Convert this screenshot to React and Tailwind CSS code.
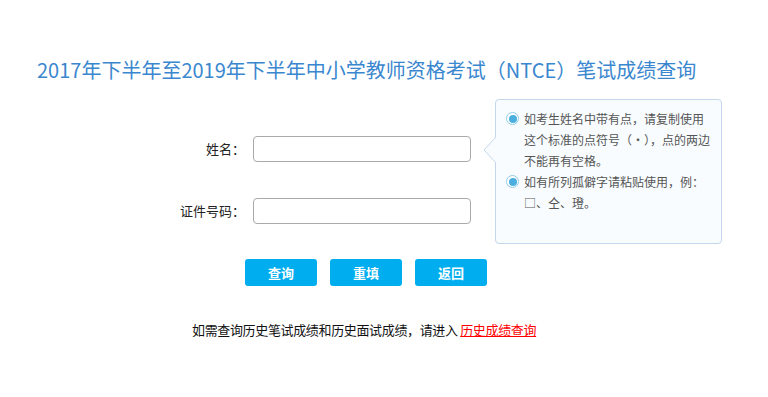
import React from "react";

const FONT = { fontFamily: '"Microsoft YaHei", "Noto Sans CJK SC", "Noto Sans", sans-serif' };

// 提示框里的一条说明
function Tip({ children }) {
  return (
    <div className="flex items-start gap-[5px]">
      <span className="mt-[4px] w-[13px] h-[13px] shrink-0 rounded-full border border-[#8fcbe8] bg-white flex items-center justify-center">
        <span className="w-[8px] h-[8px] rounded-full bg-[#4aafdf]" />
      </span>
      <p className="leading-[21px]">{children}</p>
    </div>
  );
}

export default function App() {
  return (
    <div className="relative w-[768px] h-[397px] bg-white overflow-hidden" style={FONT}>
      <h1 className="pt-[56px] pl-[37px] text-[20px] leading-[28px] text-[#3a87cf] whitespace-nowrap">
        2017年下半年至2019年下半年中小学教师资格考试（NTCE）笔试成绩查询
      </h1>

      {/* 表单 */}
      <div className="mt-[52px] flex flex-col gap-[36px] text-[13px] text-[#222]">
        <div className="flex items-center">
          <label className="w-[245px] text-right">姓名：</label>
          <input className="ml-[8px] w-[218px] h-[26px] border border-[#aaa] rounded-[4px] outline-none px-2" />
        </div>
        <div className="flex items-center">
          <label className="w-[245px] text-right">证件号码：</label>
          <input className="ml-[8px] w-[218px] h-[26px] border border-[#aaa] rounded-[4px] outline-none px-2" />
        </div>
      </div>

      <div className="mt-[35px] pl-[245px] flex gap-[13px] text-[13px] text-white font-bold">
        <button className="w-[72px] h-[27px] rounded-[3px] bg-[#00aeef]">查询</button>
        <button className="w-[72px] h-[27px] rounded-[3px] bg-[#00aeef]">重填</button>
        <button className="w-[72px] h-[27px] rounded-[3px] bg-[#00aeef]">返回</button>
      </div>

      <p className="mt-[34px] pl-[192px] text-[13px] tracking-[-0.35px] text-[#111] whitespace-nowrap">
        如需查询历史笔试成绩和历史面试成绩，请进入{" "}
        <a href="#" className="text-[#ff0000] underline">历史成绩查询</a>
      </p>

      {/* 提示框 */}
      <div className="absolute left-[495px] top-[99px] w-[227px] h-[145px] bg-[#f8fcff] border border-[#c5d6ec] rounded-[4px] pl-[10px] pr-2 pt-[8px] text-[12px] text-[#555]">
        <svg className="absolute left-[-13px] top-[37px]" width="14" height="26" viewBox="0 0 14 26">
          <path d="M13 0 L1 13 L13 26 Z" fill="#f8fcff" />
          <path d="M13 0 L1 13 L13 26" fill="none" stroke="#c5d6ec" strokeWidth="1" />
        </svg>
        <Tip>如考生姓名中带有点，请复制使用这个标准的点符号（·），点的两边不能再有空格。</Tip>
        <Tip>如有所列孤僻字请粘贴使用，例：□、仝、璒。</Tip>
      </div>
    </div>
  );
}
